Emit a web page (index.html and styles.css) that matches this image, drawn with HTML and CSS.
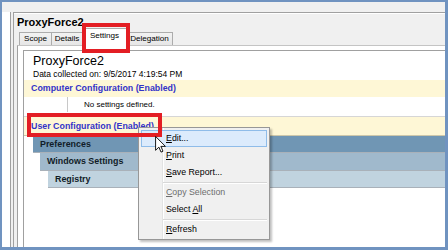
FILE: index.html
```html
<!DOCTYPE html>
<html lang="en">
<head>
  <meta charset="UTF-8">
  <title>ProxyForce2 - Settings</title>
  <link rel="stylesheet" href="styles.css">
</head>
<body>
  <div class="frame">
    <div class="topstrip"></div>
    <div class="main">
      <div class="tree"></div>
      <div class="details">
        <div class="details-inner">
          <div class="gpo-title">ProxyForce2</div>
          <div class="tabs">
            <div class="tab tab-scope">Scope</div>
            <div class="tab tab-details">Details</div>
            <div class="tab tab-settings active">Settings</div>
            <div class="tab tab-delegation">Delegation</div>
          </div>
          <div class="tab-page">
            <div class="report">
              <div class="report-title">ProxyForce2</div>
              <div class="report-date">Data collected on: 9/5/2017 4:19:54 PM</div>
              <div class="he0">Computer Configuration (Enabled)</div>
              <div class="empty-row">
                <div class="cell-blank"></div>
                <div class="cell-text">No settings defined.</div>
              </div>
              <div class="he0 user">User Configuration (Enabled)</div>
              <div class="he1">Preferences</div>
              <div class="he2">Windows Settings</div>
              <div class="he3">Registry</div>
            </div>
          </div>
        </div>
      </div>
    </div>

    <!-- context menu -->
    <ul class="menu">
      <li class="hover"><u>E</u>dit...</li>
      <li><u>P</u>rint</li>
      <li><u>S</u>ave Report...</li>
      <li class="sep"></li>
      <li class="disabled"><u>C</u>opy Selection</li>
      <li>Select <u>A</u>ll</li>
      <li class="sep"></li>
      <li><u>R</u>efresh</li>
    </ul>

    <!-- red callouts -->
    <div class="callout callout-tab"></div>
    <div class="callout callout-user"></div>

    <svg class="cursor" width="11" height="17" viewBox="0 0 12 19">
      <path d="M0.5,0.5 L0.5,16 L4.2,12.4 L6.6,18 L8.8,17 L6.4,11.6 L11.5,11.6 Z" fill="#fff" stroke="#000" stroke-width="1"/>
    </svg>
  </div>
</body>
</html>
```

FILE: styles.css
```css
body {
  margin: 0;
  font-family: "Liberation Sans", Arial, sans-serif;
  color: #000;
}

.frame {
  position: relative;
  width: 448px;
  height: 250px;
  box-sizing: border-box;
  border: solid #7093c0;
  border-width: 2px 3px 3px 2px;
  background: #f0f0f0;
  display: flex;
  flex-direction: column;
  overflow: hidden;
}

.topstrip {
  height: 10px;
  flex: none;
}

.main {
  flex: 1;
  display: flex;
  min-height: 0;
}

.tree {
  width: 8px;
  background: #fff;
  border-right: 1px solid #a0a0a0;
}

.details {
  flex: 1;
  min-width: 0;
  margin-left: 2px;
  border-left: 1px solid #a0a0a0;
  border-top: 1px solid #a0a0a0;
}

.details-inner {
  height: 100%;
  box-sizing: border-box;
  border-top: 1px solid #fff;
  padding-left: 3px;
  display: flex;
  flex-direction: column;
}

.gpo-title {
  font-weight: bold;
  font-size: 11px;
  line-height: 16px;
  height: 16px;
}

/* tabs */
.tabs {
  display: flex;
  align-items: flex-end;
  height: 15px;
  padding-left: 2px;
}

.tab {
  box-sizing: border-box;
  height: 13px;
  line-height: 12px;
  font-size: 8.1px;
  text-align: center;
  border: 1px solid #acacac;
  border-bottom: none;
  background: linear-gradient(#f2f2f2, #e6e6e6);
  margin-left: -1px;
}

.tab-scope { width: 33px; margin-left: 0; }
.tab-details { width: 32px; }
.tab-settings { width: 45px; }
.tab-delegation { width: 47px; }

.tab.active {
  height: 18px;
  line-height: 13px;
  background: #fff;
  margin-bottom: -1px;
  position: relative;
  z-index: 1;
}

.tab-page {
  flex: 1;
  background: #fff;
  border-top: 1px solid #c4c4c4;
  border-left: 1px solid #a0a0a0;
  padding: 4px 0 0 5px;
}

/* report */
.report {
  height: 100%;
  background: #fff;
  border-top: 1px solid #a0a0a0;
  border-left: 1px solid #a0a0a0;
}

.report-title {
  font-size: 12.5px;
  line-height: 15px;
  padding: 3px 0 0 9px;
}

.report-date {
  font-size: 8.5px;
  line-height: 11px;
  padding-left: 9px;
}

.he0 {
  background: #fef7d6;
  color: #3333c8;
  font-weight: bold;
  font-size: 8.85px;
  line-height: 17px;
  padding-left: 7px;
}

.he0.user {
  margin-top: 4px;
  border-top: 1px solid #d6d6d6;
  border-bottom: 1px solid #cdc7aa;
  line-height: 18px;
}

.empty-row {
  display: flex;
  height: 15px;
}

.cell-blank {
  width: 43px;
  border-right: 1px solid #c8c8c8;
}

.cell-text {
  font-size: 8px;
  line-height: 15px;
  padding-left: 16px;
}

.he1, .he2, .he3 {
  font-weight: bold;
  font-size: 8.9px;
  color: #101c28;
  padding-left: 7px;
  border-bottom: 1px solid #a9b1b9;
}

.he1 { margin-left: 9px; background: #7096b4; line-height: 16px; }
.he2 { margin-left: 16px; background: #a0b9cc; line-height: 17px; }
.he3 { margin-left: 24px; background: #c0d3df; line-height: 16px; }

/* context menu */
.menu {
  position: absolute;
  left: 136px;
  top: 125px;
  width: 132px;
  box-sizing: border-box;
  margin: 0;
  padding: 2px 0 1px;
  list-style: none;
  border: 1px solid #979797;
  background: linear-gradient(to right, #f0f0f0 0 23px, #e2e3e3 23px 24px, #fff 24px 25px, #f0f0f0 25px);
  box-shadow: 2px 2px 2px rgba(0, 0, 0, 0.25);
  font-size: 8.8px;
  z-index: 2;
}

.menu li {
  box-sizing: border-box;
  height: 17px;
  line-height: 15px;
  margin: 0 2px;
  padding-left: 24px;
  border: 1px solid transparent;
}

.menu li.hover {
  background: #dcebfc;
  border-color: #8fbce9;
}

.menu li.disabled {
  color: #6d6d6d;
}

.menu li.sep {
  height: 1px;
  margin: 1px 2px 0 24px;
  padding: 0;
  border: none;
  border-bottom: 1px solid #fff;
  background: #d7d7d7;
  box-sizing: content-box;
}

.callout {
  position: absolute;
  box-sizing: border-box;
  border: 4px solid #e31e24;
  z-index: 3;
}

.callout-tab {
  left: 80px;
  top: 21px;
  width: 48px;
  height: 30px;
}

.callout-user {
  left: 25px;
  top: 111px;
  width: 135px;
  height: 24px;
}

.cursor {
  position: absolute;
  left: 153px;
  top: 134px;
  z-index: 4;
}
```
